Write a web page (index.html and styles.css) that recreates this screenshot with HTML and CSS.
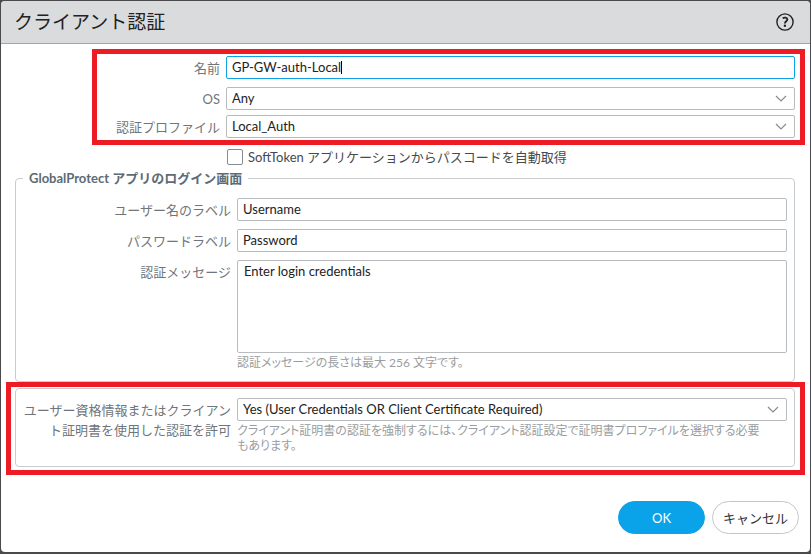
FILE: index.html
```html
<!DOCTYPE html>
<html lang="ja">
<head>
    <meta charset="UTF-8">
    <meta name="viewport" content="width=device-width, initial-scale=1">
    <title>クライアント認証</title>
    <link rel="stylesheet" href="styles.css">
</head>
<body>
    <form class="dialog">
        <div class="dialog-header">
            <h1>クライアント認証</h1>
            <button type="button" class="help" aria-label="ヘルプ">
                <svg width="18" height="18" viewBox="0 0 18 18" fill="none" stroke="#222">
                    <circle cx="9" cy="9" r="8.1" stroke-width="1.4"/>
                    <path d="M6.7 5.3C8.5 4.1 11.3 4.4 11.3 6.5C11.3 8.3 8.9 8.3 8.9 10.5" stroke-width="1.9"/>
                    <circle cx="8.9" cy="12.8" r="1.2" fill="#222" stroke="none"/>
                </svg>
            </button>
        </div>

        <div class="dialog-body">
            <div class="main-fields">
                <div class="row">
                    <label for="name">名前</label>
                    <div class="field">
                        <input type="text" id="name" class="control focused" value="GP-GW-auth-Local">
                        <span class="caret"></span>
                    </div>
                </div>
                <div class="row">
                    <label for="os">OS</label>
                    <div class="field">
                        <select id="os" class="control"><option>Any</option></select>
                        <svg class="arrow" width="12" height="8" viewBox="0 0 12 8"><path d="M1 1L6 6L11 1"/></svg>
                    </div>
                </div>
                <div class="row">
                    <label for="profile">認証プロファイル</label>
                    <div class="field">
                        <select id="profile" class="control"><option>Local_Auth</option></select>
                        <svg class="arrow" width="12" height="8" viewBox="0 0 12 8"><path d="M1 1L6 6L11 1"/></svg>
                    </div>
                </div>
            </div>

            <div class="check-row">
                <input type="checkbox" id="softtoken">
                <label for="softtoken">SoftToken アプリケーションからパスコードを自動取得</label>
            </div>

            <fieldset class="group login">
                <legend>GlobalProtect アプリのログイン画面</legend>
                <div class="row">
                    <label for="userLabel">ユーザー名のラベル</label>
                    <input type="text" id="userLabel" class="control" value="Username">
                </div>
                <div class="row">
                    <label for="passLabel">パスワードラベル</label>
                    <input type="text" id="passLabel" class="control" value="Password">
                </div>
                <div class="row">
                    <label for="message">認証メッセージ</label>
                    <div class="field">
                        <textarea id="message" class="control">Enter login credentials</textarea>
                        <p class="hint">認証メッセージの長さは最大 256 文字です。</p>
                    </div>
                </div>
            </fieldset>

            <div class="group allow">
                <div class="row">
                    <label for="allow">ユーザー資格情報またはクライアント証明書を使用した認証を許可</label>
                    <div class="field">
                        <select id="allow" class="control"><option>Yes (User Credentials OR Client Certificate Required)</option></select>
                        <svg class="arrow" width="12" height="8" viewBox="0 0 12 8"><path d="M1 1L6 6L11 1"/></svg>
                        <p class="hint">クライアント証明書の認証を強制するには、クライアント認証設定で証明書プロファイルを選択する必要もあります。</p>
                    </div>
                </div>
            </div>
        </div>

        <div class="dialog-footer">
            <button type="submit" class="btn primary">OK</button>
            <button type="button" class="btn">キャンセル</button>
        </div>
    </form>
</body>
</html>
```
FILE: styles.css
```css
* {
    box-sizing: border-box;
}
body {
    margin: 0;
    padding: 1px 1px 2px;
    background-color: #4a4a4c;
    font-family: Lato, "Noto Sans CJK JP", sans-serif;
    font-size: 13px;
    line-height: 20px;
    color: #222;
}
.dialog {
    min-height: calc(100vh - 3px);
    background-color: #fff;
    border-radius: 4px;
    overflow: hidden;
}
.dialog-header {
    display: flex;
    justify-content: space-between;
    align-items: center;
    height: 43px;
    padding: 0 16px 0 13px;
    background-color: #dadbdd;
    border-bottom: 1px solid #a0a6aa;
}
h1 {
    margin: 0;
    font-size: 19px;
    font-weight: normal;
}
.help {
    display: flex;
    padding: 0;
    border: none;
    background: none;
    cursor: pointer;
}
.dialog-body {
    padding: 12px 15px 0 14px;
}

/* form rows */
.row {
    display: grid;
    grid-template-columns: 205px 1fr;
    gap: 6px;
    margin-bottom: 8px;
}
.row label {
    padding-top: 2px;
    text-align: right;
    color: #6f7579;
}
.field {
    position: relative;
}
.control {
    display: block;
    width: 100%;
    height: 23px;
    margin: 0;
    padding: 0 5px 2px;
    border: 1px solid #b9bcbe;
    border-radius: 2px;
    background-color: #fff;
    font: inherit;
    color: #222;
    outline: none;
    appearance: none;
}
.control.focused {
    border-color: #0fa0e5;
}
textarea.control {
    height: 93px;
    padding: 0 6px;
    resize: none;
}
.caret {
    position: absolute;
    top: 5px;
    left: 115px;
    width: 1px;
    height: 13px;
    background-color: #000;
}
.arrow {
    position: absolute;
    top: 8px;
    right: 8px;
    fill: none;
    stroke: #858b8f;
    stroke-width: 1.2;
    pointer-events: none;
}
.hint {
    margin: 0;
    padding: 2px 20px 0 0;
    font-size: 12px;
    line-height: 15px;
    font-feature-settings: "palt";
    color: #999da0;
}

.main-fields {
    position: relative;
}
.main-fields .row:nth-child(n+2) {
    margin-bottom: 5px;
}
.check-row {
    display: flex;
    align-items: center;
    gap: 5px;
    padding: 4px 0 0 212px;
}
.check-row input {
    width: 16px;
    height: 16px;
    margin: 0;
    border: 1px solid #858b8f;
    border-radius: 2px;
    appearance: none;
}
.check-row label {
    color: #444a4e;
}

/* bordered groups */
.group {
    margin: 0;
    padding: 9px 7px 0 0;
    border: 1px solid #c9cccf;
    border-radius: 4px;
}
.group .row {
    grid-template-columns: 208px 1fr;
    padding-left: 7px;
}
.login {
    margin: 1px 0 6px;
    padding-top: 10px;
    padding-bottom: 3px;
}
.login legend {
    margin-left: 7px;
    padding: 0 6px;
    font-weight: bold;
    color: #5c6b75;
}
.allow {
    position: relative;
    padding-bottom: 5px;
}

/* red highlight frames */
.main-fields::after,
.allow::after {
    content: "";
    position: absolute;
    top: -7px;
    right: -10px;
    bottom: -7px;
    left: 77px;
    border: 5px solid #ed1c24;
    pointer-events: none;
}
.allow::after {
    right: -11px;
    bottom: -9px;
    left: -10px;
}

.dialog-footer {
    display: flex;
    justify-content: flex-end;
    gap: 7px;
    padding: 34px 11px 17px;
}
.btn {
    min-width: 87px;
    height: 33px;
    padding: 0 10px;
    border: 1px solid #c3c6c8;
    border-radius: 17px;
    background-color: #fff;
    font: inherit;
    color: #333;
    cursor: pointer;
}
.btn.primary {
    border-color: #0aa2e8;
    background-color: #0aa2e8;
    color: #fff;
}
```
